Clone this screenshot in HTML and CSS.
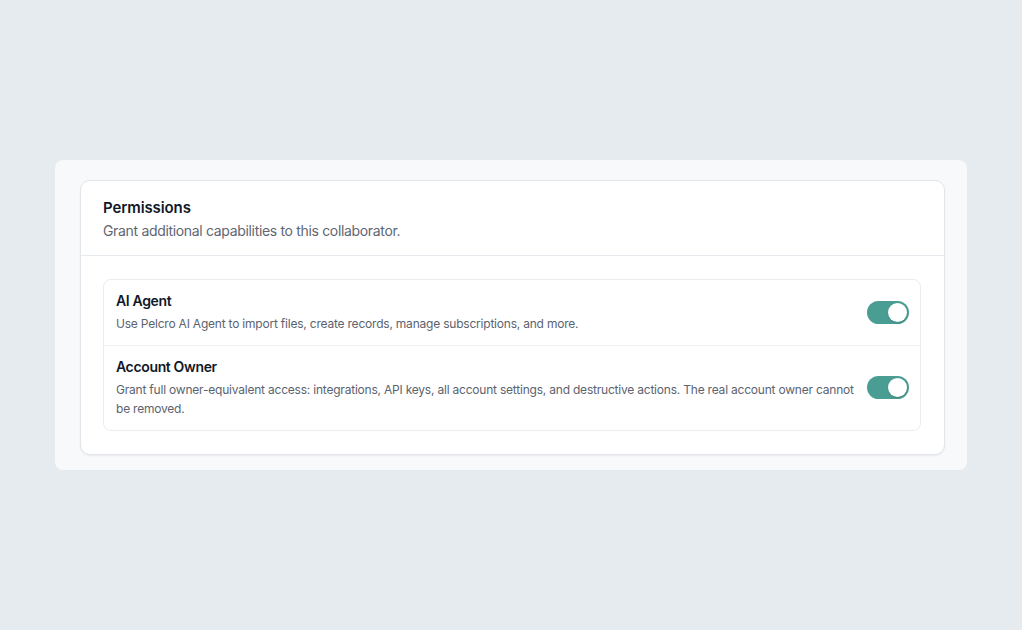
FILE: index.html
```html
<!DOCTYPE html>
<html lang="en">
<head>
<meta charset="utf-8">
<title>Permissions</title>
<link rel="stylesheet" href="styles.css">
</head>
<body>
<div class="page">
  <div class="panel">
    <section class="card">
      <header class="card-header">
        <h2 class="card-title">Permissions</h2>
        <p class="card-subtitle">Grant additional capabilities to this collaborator.</p>
      </header>
      <div class="card-body">
        <div class="list">
          <div class="row">
            <div class="row-text">
              <div class="row-title">AI Agent</div>
              <div class="row-desc">Use Pelcro AI Agent to import files, create records, manage subscriptions, and more.</div>
            </div>
            <span class="toggle on"><span class="knob"></span></span>
          </div>
          <div class="row">
            <div class="row-text">
              <div class="row-title">Account Owner</div>
              <div class="row-desc">Grant full owner-equivalent access: integrations, API keys, all account settings, and destructive actions. The real account owner cannot be removed.</div>
            </div>
            <span class="toggle on"><span class="knob"></span></span>
          </div>
        </div>
      </div>
    </section>
  </div>
</div>
</body>
</html>
```

FILE: styles.css
```css
* { box-sizing: border-box; }
html, body {
  margin: 0;
  padding: 0;
  background: #e5ebee;
  font-family: Inter, "Noto Sans", "Liberation Sans", sans-serif;
  -webkit-font-smoothing: antialiased;
}
.page {
  padding-top: 160px;
  display: flex;
  justify-content: center;
}
.panel {
  width: 912px;
  background: #f7f9fa;
  border-radius: 8px;
  padding: 20px 22px 15px 25px;
}
.card {
  background: #fff;
  border: 1px solid #e2e6ea;
  border-radius: 10px;
  box-shadow: 0 1px 2px rgba(16, 24, 40, 0.06);
}
.card-header {
  padding: 17px 22px 14px;
  border-bottom: 1px solid #e7eaee;
}
.card-title {
  margin: 0;
  font-size: 15px;
  line-height: 20px;
  font-weight: 600;
  letter-spacing: -0.1px;
  color: #111827;
}
.card-subtitle {
  margin: 3px 0 0;
  font-size: 14px;
  line-height: 20px;
  letter-spacing: -0.33px;
  color: #5f6672;
}
.card-body {
  padding: 23px 23px 23px 22px;
}
.list {
  border: 1px solid #eaecef;
  border-radius: 8px;
}
.row {
  display: flex;
  align-items: center;
  gap: 12px;
  padding: 11px 11px 12px 12px;
}
.row + .row {
  border-top: 1px solid #f0f2f4;
}
.row-text {
  flex: 1;
  min-width: 0;
}
.row-title {
  font-size: 14px;
  line-height: 20px;
  font-weight: 600;
  letter-spacing: -0.35px;
  color: #111827;
}
.row-desc {
  margin-top: 3px;
  font-size: 12px;
  line-height: 19px;
  letter-spacing: -0.21px;
  color: #5b6370;
}
.toggle {
  flex: none;
  position: relative;
  width: 42px;
  height: 23px;
  border-radius: 12px;
  background: #4a9d93;
}
.toggle .knob {
  position: absolute;
  top: 2px;
  right: 2px;
  width: 19px;
  height: 19px;
  border-radius: 50%;
  background: #fff;
  box-shadow: 0 1px 2px rgba(0, 0, 0, 0.15);
}
```
